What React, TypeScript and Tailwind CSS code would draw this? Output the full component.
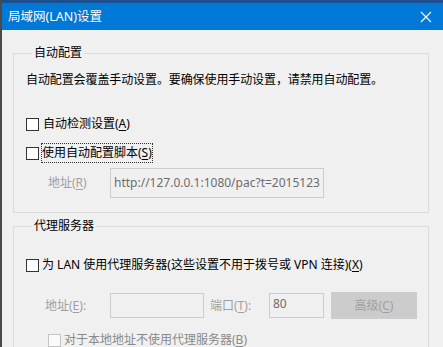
import React from 'react';

function Box({ disabled = false }: { disabled?: boolean }) {
  return (
    <span
      className={
        'inline-block w-[13px] h-[13px] shrink-0 border ' +
        (disabled ? 'border-[#c4c4c4] bg-[#fafafa]' : 'border-[#333333] bg-white')
      }
    />
  );
}

// accelerator key, underlined like win32 mnemonics
function K({ c }: { c: string }) {
  return <span className="underline underline-offset-2">{c}</span>;
}

export default function App() {
  return (
    <div className="w-[443px] h-[347px] overflow-hidden bg-[#f0f0f0] border-l-2 border-[#4a4a4a] font-['Noto_Sans','Noto_Sans_CJK_SC',sans-serif] text-[12px] leading-[16px] text-black">
      {/* Title bar */}
      <div className="h-[30px] bg-[#0078d7] border-t-[3px] border-[#1d4f8f] flex items-center justify-between pl-[6px] pr-[10px]">
        <span className="text-white text-[12.5px]">局域网(LAN)设置</span>
        <svg width="12" height="12" viewBox="0 0 12 12" className="mr-[1px]">
          <path d="M1 1 L11 11 M11 1 L1 11" stroke="#ffffff" strokeWidth="1.2" />
        </svg>
      </div>

      {/* 自动配置 */}
      <fieldset className="ml-[11px] mt-[15px] w-[416px] border border-[#dcdcdc] pl-[12px] pb-[14px]">
        <legend className="ml-[6px] px-[2px]">自动配置</legend>
        <div className="mt-[11px] tracking-[-0.1px]">自动配置会覆盖手动设置。要确保使用手动设置，请禁用自动配置。</div>

        <label className="mt-[28px] flex items-center gap-[3px]">
          <Box />
          <span className="px-[1px]">
            自动检测设置(<K c="A" />)
          </span>
        </label>

        <label className="mt-[11px] flex items-center gap-[2px]">
          <Box />
          <span className="px-[1px] py-[2px] outline outline-1 outline-dotted outline-[#333333] -outline-offset-1">
            使用自动配置脚本(<K c="S" />)
          </span>
        </label>

        <div className="mt-[5px] flex items-center">
          <span className="w-[84px] pl-[22px] text-[#a0a0a0]">
            地址(<K c="R" />)
          </span>
          <div className="w-[214px] h-[30px] border border-[#cccccc] bg-[#f0f0f0] pl-[3px] flex items-center overflow-hidden whitespace-nowrap text-[#6d6d6d]">
            http://127.0.0.1:1080/pac?t=2015123
          </div>
        </div>
      </fieldset>

      {/* 代理服务器 */}
      <fieldset className="ml-[11px] mt-[5px] w-[416px] border border-[#dcdcdc] pl-[12px] pb-[20px]">
        <legend className="ml-[6px] px-[2px]">代理服务器</legend>

        <label className="mt-[23px] flex items-center gap-[3px]">
          <Box />
          <span>
            为 LAN 使用代理服务器(这些设置不用于拨号或 VPN 连接)(<K c="X" />)
          </span>
        </label>

        <div className="mt-[19px] flex items-center">
          <span className="w-[84px] pl-[19px] text-[#a0a0a0]">
            地址(<K c="E" />):
          </span>
          <div className="w-[94px] h-[25px] border border-[#cccccc] bg-[#f0f0f0]" />
          <span className="w-[65px] pl-[6px] text-[#a0a0a0]">
            端口(<K c="T" />):
          </span>
          <div className="w-[55px] h-[25px] border border-[#cccccc] bg-[#f0f0f0] pl-[3px] pt-[2px] text-[#6d6d6d]">80</div>
          <div className="ml-[7px] w-[86px] h-[27px] bg-[#cccccc] flex items-center justify-center text-[#a0a0a0]">
            高级(<K c="C" />)
          </div>
        </div>

        <label className="mt-[13px] ml-[22px] flex items-center gap-[3px] text-[#a0a0a0]">
          <Box disabled />
          <span className="text-[#8a8a8a]">
            对于本地地址不使用代理服务器(<K c="B" />)
          </span>
        </label>
      </fieldset>
    </div>
  );
}
